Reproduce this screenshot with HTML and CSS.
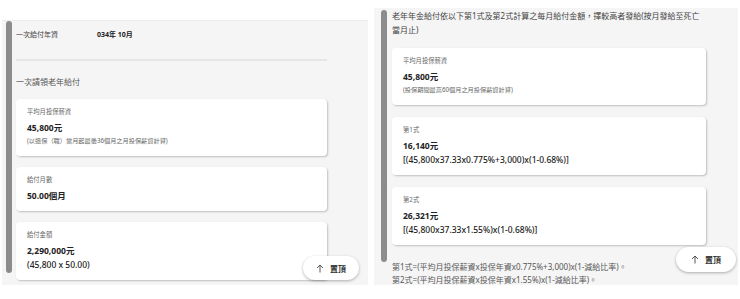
FILE: index.html
```html
<!DOCTYPE html>
<html lang="zh-Hant">

<head>
  <meta charset="UTF-8">
  <meta name="viewport" content="width=device-width, initial-scale=1.0">
  <title>老年給付試算</title>
  <link rel="stylesheet" href="styles.css">
</head>

<body>
  <div class="shots">
    <!-- lump-sum result -->
    <section class="phone phone-left">
      <div class="thumb"></div>
      <div class="page">
        <div class="row-head">
          <span class="row-label">一次給付年資</span>
          <span class="row-value">034年 10月</span>
        </div>
        <div class="divider"></div>
        <h2 class="section-title">一次請領老年給付</h2>
        <div class="cards">
          <div class="card">
            <p class="card-label">平均月投保薪資</p>
            <p class="card-value">45,800元</p>
            <p class="card-note">(以退保（職）當月起最後36個月之月投保薪資計算)</p>
          </div>
          <div class="card">
            <p class="card-label">給付月數</p>
            <p class="card-value">50.00個月</p>
          </div>
          <div class="card">
            <p class="card-label">給付金額</p>
            <p class="card-value">2,290,000元</p>
            <p class="card-formula">(45,800 x 50.00)</p>
          </div>
        </div>
      </div>
      <button class="to-top" type="button">
        <svg width="8" height="9" viewBox="0 0 8 9"><path d="M4 8.5V1M1 4l3-3 3 3" fill="none" stroke="#444" stroke-width="0.9"/></svg>
        <span>置頂</span>
      </button>
    </section>

    <!-- annuity result -->
    <section class="phone phone-right">
      <div class="thumb"></div>
      <div class="page">
        <p class="intro">老年年金給付依以下第1式及第2式計算之每月給付金額，擇較高者發給(按月發給至死亡當月止)</p>
        <div class="cards">
          <div class="card">
            <p class="card-label">平均月投保薪資</p>
            <p class="card-value">45,800元</p>
            <p class="card-note">(投保期間最高60個月之月投保薪資計算)</p>
          </div>
          <div class="card">
            <p class="card-label">第1式</p>
            <p class="card-value">16,140元</p>
            <p class="card-formula">[(45,800x37.33x0.775%+3,000)x(1-0.68%)]</p>
          </div>
          <div class="card">
            <p class="card-label">第2式</p>
            <p class="card-value">26,321元</p>
            <p class="card-formula">[(45,800x37.33x1.55%)x(1-0.68%)]</p>
          </div>
        </div>
        <p class="footnote">第1式=(平均月投保薪資x投保年資x0.775%+3,000)x(1-減給比率)。</p>
        <p class="footnote">第2式=(平均月投保薪資x投保年資x1.55%)x(1-減給比率)。</p>
      </div>
      <button class="to-top" type="button">
        <svg width="8" height="9" viewBox="0 0 8 9"><path d="M4 8.5V1M1 4l3-3 3 3" fill="none" stroke="#444" stroke-width="0.9"/></svg>
        <span>置頂</span>
      </button>
    </section>
  </div>
</body>

</html>
```

FILE: styles.css
```css
body {
  margin: 0;
  background: #fff;
  font-family: "Noto Sans", "Noto Sans CJK TC", sans-serif;
  color: #333;
}

p,
h2 {
  margin: 0;
}

.shots {
  display: flex;
  align-items: flex-start;
  gap: 6px;
  padding-left: 2px;
}

/*each panel is a cropped phone screen*/
.phone {
  position: relative;
  display: flex;
  align-items: flex-start;
  background: #f5f5f5;
  overflow: hidden;
}

.phone-left {
  width: 366px;
  height: 265px;
  margin-top: 20px;
  border-top: 1px solid #ececec;
  padding-left: 4px;
  gap: 4px;
  box-sizing: border-box;
}

.phone-right {
  width: 364px;
  height: 277px;
  margin-top: 8px;
  padding-left: 7px;
  gap: 5px;
  box-sizing: border-box;
}

.thumb {
  flex: none;
  width: 6px;
  height: 252px;
  border-radius: 3px;
  background: #8c8c8c;
}

.phone-right .thumb {
  margin-top: 2px;
}

.page {
  display: flex;
  flex-direction: column;
}

.phone-left .page {
  width: 311px;
}

.phone-right .page {
  width: 314px;
}

/*left: header row*/
.row-head {
  display: flex;
  padding-top: 7px;
  font-size: 7px;
  line-height: 14px;
}

.row-label {
  width: 81px;
  color: #444;
}

.row-value {
  font-weight: 700;
  color: #222;
}

.divider {
  height: 2px;
  margin-top: 17px;
  background: #e6e6e6;
}

.section-title {
  margin-top: 14px;
  margin-bottom: 10px;
  font-size: 8px;
  font-weight: 400;
  line-height: 14px;
  color: #555;
}

/*right: intro text*/
.intro {
  padding-top: 1px;
  font-size: 8px;
  line-height: 14px;
  color: #444;
}

.cards {
  display: flex;
  flex-direction: column;
  gap: 11px;
}

.phone-right .cards {
  margin-top: 11px;
  gap: 12px;
}

.card {
  padding: 8px 11px 9px;
  background: #fff;
  border-radius: 4px;
  box-shadow: 1px 1px 2px rgba(0, 0, 0, 0.22);
}

.card-label {
  font-size: 6.3px;
  line-height: 10px;
  color: #666;
}

.card-value {
  margin-top: 5px;
  font-size: 8.5px;
  font-weight: 700;
  line-height: 12px;
  color: #222;
}

.card-note {
  margin-top: 1px;
  font-size: 6.2px;
  line-height: 12px;
  color: #666;
}

.card-formula {
  margin-top: 2px;
  font-size: 8.5px;
  font-weight: 500;
  line-height: 12px;
  color: #222;
}

.footnote {
  font-size: 8px;
  line-height: 13px;
  color: #555;
}

.phone-right .cards + .footnote {
  margin-top: 15px;
}

/*floating back-to-top pill*/
.to-top {
  position: absolute;
  display: flex;
  align-items: center;
  justify-content: center;
  gap: 6px;
  padding: 0;
  border: none;
  border-radius: 13px;
  background: #fff;
  box-shadow: 0 1px 3px rgba(0, 0, 0, 0.3);
  font-family: inherit;
  font-size: 8px;
  font-weight: 700;
  color: #333;
}

.phone-left .to-top {
  left: 301px;
  top: 235px;
  width: 56px;
  height: 24px;
}

.phone-right .to-top {
  left: 302px;
  top: 239px;
  width: 60px;
  height: 25px;
}
```
